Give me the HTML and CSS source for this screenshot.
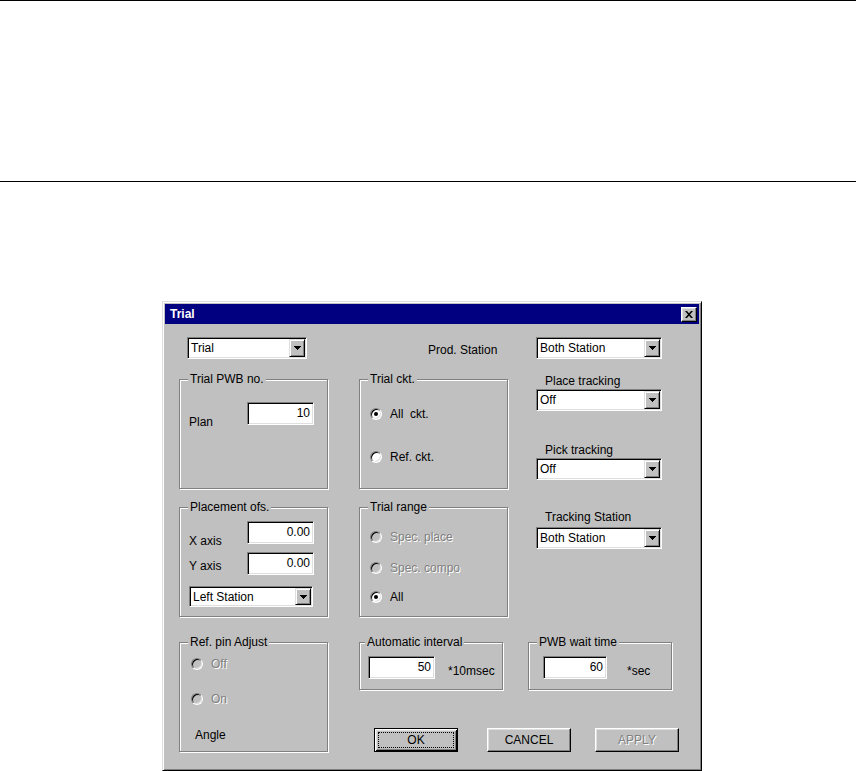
FILE: index.html
```html
<!DOCTYPE html>
<html>
<head>
<meta charset="utf-8">
<title>Trial</title>
<link rel="stylesheet" href="styles.css">
</head>
<body>
<div class="topband"></div>
<div class="dialog">
  <div class="titlebar">
    <span class="title">Trial</span>
    <span class="close"><svg width="8" height="7" viewBox="0 0 8 7"><path d="M0 0h2l2 2.2L6 0h2L5 3.5 8 7H6L4 4.8 2 7H0l3-3.5z" fill="#000"/></svg></span>
  </div>
  <div class="client">
    <div class="row row1">
      <div class="combo c-trial"><span class="combo-text">Trial</span><span class="combo-btn"><svg width="7" height="4" viewBox="0 0 7 4"><rect x="0" y="0" width="7" height="1"/><rect x="1" y="1" width="5" height="1"/><rect x="2" y="2" width="3" height="1"/><rect x="3" y="3" width="1" height="1"/></svg></span></div>
      <div class="prod-label">Prod. Station</div>
      <div class="combo c-right"><span class="combo-text">Both Station</span><span class="combo-btn"><svg width="7" height="4" viewBox="0 0 7 4"><rect x="0" y="0" width="7" height="1"/><rect x="1" y="1" width="5" height="1"/><rect x="2" y="2" width="3" height="1"/><rect x="3" y="3" width="1" height="1"/></svg></span></div>
    </div>

    <div class="row row2">
      <div class="group g-big">
        <div class="gtitle">Trial PWB no.</div>
        <div class="field f-plan">
          <span class="flabel l-plan">Plan</span>
          <span class="edit e-std">10</span>
        </div>
      </div>
      <div class="group g-big">
        <div class="gtitle">Trial ckt.</div>
        <div class="opt o-allckt"><span class="radio on"></span><span class="otext">All&nbsp; ckt.</span></div>
        <div class="opt o-refckt"><span class="radio"></span><span class="otext">Ref. ckt.</span></div>
      </div>
      <div class="stack">
        <div class="slabel s-place">Place tracking</div>
        <div class="combo c-right"><span class="combo-text">Off</span><span class="combo-btn"><svg width="7" height="4" viewBox="0 0 7 4"><rect x="0" y="0" width="7" height="1"/><rect x="1" y="1" width="5" height="1"/><rect x="2" y="2" width="3" height="1"/><rect x="3" y="3" width="1" height="1"/></svg></span></div>
        <div class="slabel s-pick">Pick tracking</div>
        <div class="combo c-right"><span class="combo-text">Off</span><span class="combo-btn"><svg width="7" height="4" viewBox="0 0 7 4"><rect x="0" y="0" width="7" height="1"/><rect x="1" y="1" width="5" height="1"/><rect x="2" y="2" width="3" height="1"/><rect x="3" y="3" width="1" height="1"/></svg></span></div>
      </div>
    </div>

    <div class="row row3">
      <div class="group g-big">
        <div class="gtitle">Placement ofs.</div>
        <div class="field f-x">
          <span class="flabel l-x">X axis</span>
          <span class="edit e-std">0.00</span>
        </div>
        <div class="field f-y">
          <span class="flabel l-y">Y axis</span>
          <span class="edit e-std">0.00</span>
        </div>
        <div class="combo c-left"><span class="combo-text">Left Station</span><span class="combo-btn"><svg width="7" height="4" viewBox="0 0 7 4"><rect x="0" y="0" width="7" height="1"/><rect x="1" y="1" width="5" height="1"/><rect x="2" y="2" width="3" height="1"/><rect x="3" y="3" width="1" height="1"/></svg></span></div>
      </div>
      <div class="group g-big">
        <div class="gtitle">Trial range</div>
        <div class="opt o-r1"><span class="radio dis"></span><span class="otext dis">Spec. place</span></div>
        <div class="opt o-r2"><span class="radio dis"></span><span class="otext dis">Spec. compo</span></div>
        <div class="opt o-r3"><span class="radio on"></span><span class="otext">All</span></div>
      </div>
      <div class="stack">
        <div class="slabel s-track">Tracking Station</div>
        <div class="combo c-right"><span class="combo-text">Both Station</span><span class="combo-btn"><svg width="7" height="4" viewBox="0 0 7 4"><rect x="0" y="0" width="7" height="1"/><rect x="1" y="1" width="5" height="1"/><rect x="2" y="2" width="3" height="1"/><rect x="3" y="3" width="1" height="1"/></svg></span></div>
      </div>
    </div>

    <div class="row row4">
      <div class="group g-big">
        <div class="gtitle">Ref. pin Adjust</div>
        <div class="opt o-off"><span class="radio dis"></span><span class="otext dis">Off</span></div>
        <div class="opt o-on"><span class="radio dis"></span><span class="otext dis">On</span></div>
        <div class="angle">Angle</div>
      </div>
      <div class="bc">
        <div class="bc-groups">
          <div class="group g-small g-auto">
            <div class="gtitle t-auto">Automatic interval</div>
            <div class="field f-small">
              <span class="edit e-auto">50</span>
              <span class="unit u-auto">*10msec</span>
            </div>
          </div>
          <div class="group g-small g-wait">
            <div class="gtitle">PWB wait time</div>
            <div class="field f-small">
              <span class="edit e-wait">60</span>
              <span class="unit u-wait">*sec</span>
            </div>
          </div>
        </div>
        <div class="buttons">
          <div class="btn btn-default b-ok"><span class="focus">OK</span></div>
          <div class="btn b-cancel">CANCEL</div>
          <div class="btn b-apply dis">APPLY</div>
        </div>
      </div>
    </div>
  </div>
</div>
</body>
</html>
```
FILE: styles.css
```css
* { box-sizing: border-box; }

html, body {
  margin: 0;
  overflow: hidden;
}

body {
  background: #fff;
  font-family: "Liberation Sans", Arial, sans-serif;
  font-size: 12px;
  line-height: 14px;
  color: #000;
}

.topband {
  height: 182px;
  border-top: 1px solid #000;
  border-bottom: 1px solid #000;
}

.dialog {
  margin: 119px 0 0 162px;
  width: 540px;
  height: 470px;
  background: #c0c0c0;
  border: 1px solid;
  border-color: #dfdfdf #000 #000 #dfdfdf;
  box-shadow: inset 1px 1px 0 #fff, inset -1px -1px 0 #808080;
  padding: 2px;
}

.titlebar {
  height: 20px;
  background: #000080;
  color: #fff;
  font-weight: bold;
  display: flex;
  align-items: center;
  justify-content: space-between;
  padding: 0 2px 0 5px;
}

.close {
  width: 16px;
  height: 15px;
  background: #c0c0c0;
  border: 1px solid;
  border-color: #fff #000 #000 #fff;
  box-shadow: inset -1px -1px 0 #808080, inset 1px 1px 0 #dfdfdf;
  display: flex;
  align-items: center;
  justify-content: center;
}

.client {
  padding: 13px 0 0 14px;
}

.row {
  display: grid;
  grid-template-columns: 180px 169px 1fr;
  align-items: start;
}

.row2 { margin-top: 13px; }
.row3 { margin-top: 11px; }
.row4 { margin-top: 18px; grid-template-columns: 180px 1fr; }

/* sunken field look */
.combo, .edit {
  background: #fff;
  border: 1px solid;
  border-color: #808080 #fff #fff #808080;
  box-shadow: inset 1px 1px 0 #000, inset -1px -1px 0 #dfdfdf;
}

.combo {
  display: flex;
  height: 22px;
  padding: 1px;
}

.combo-text {
  flex: 1;
  padding-left: 2px;
  line-height: 18px;
  white-space: nowrap;
}

.combo-btn {
  width: 16px;
  background: #c0c0c0;
  border: 1px solid;
  border-color: #dfdfdf #000 #000 #dfdfdf;
  box-shadow: inset 1px 1px 0 #fff, inset -1px -1px 0 #808080;
  display: flex;
  align-items: center;
  justify-content: center;
}

.c-trial { width: 120px; margin-left: 8px; }
.c-right { width: 126px; margin-left: 8px; }
.c-left { width: 124px; height: 21px; margin: 11px 0 0 9px; }

.prod-label {
  margin: 6px 0 0 69px;
  white-space: nowrap;
}

.edit {
  display: block;
  height: 23px;
  line-height: 21px;
  text-align: right;
  padding: 0 3px;
}

.e-std { width: 67px; }
.e-auto { width: 67px; margin-left: 8px; }
.e-wait { width: 64px; margin-left: 14px; }

/* group boxes */
.group {
  margin-top: 7px;
  border: 1px solid #808080;
  box-shadow: inset 1px 1px 0 #fff, 1px 1px 0 #fff;
}

.g-big { width: 149px; height: 110px; }
.g-small { width: 144px; height: 48px; }

.gtitle {
  width: fit-content;
  margin: -8px 0 0 8px;
  padding: 0 2px;
  background: #c0c0c0;
  white-space: nowrap;
}

.t-auto { margin-left: 5px; }

.field {
  display: flex;
  align-items: flex-start;
  height: 23px;
}

.f-plan { margin-top: 16px; }
.f-x { margin-top: 7px; }
.f-y { margin-top: 8px; }
.f-small { margin-top: 7px; }

.flabel {
  width: 58px;
  margin-left: 9px;
  white-space: nowrap;
}

.l-plan { padding-top: 13px; }
.l-x { padding-top: 13px; }
.l-y { padding-top: 7px; }

.unit { padding-top: 8px; white-space: nowrap; }
.u-auto { margin-left: 13px; }
.u-wait { margin-left: 20px; }

/* radio options */
.opt {
  display: flex;
  align-items: center;
  height: 14px;
  margin-left: 10px;
}

.o-allckt { margin-top: 21px; }
.o-refckt { margin-top: 29px; }
.o-r1 { margin-top: 16px; }
.o-r2 { margin-top: 17px; }
.o-r3 { margin-top: 15px; }
.o-off { margin-top: 8px; margin-left: 11px; }
.o-on { margin-top: 21px; margin-left: 11px; }

.radio {
  position: relative;
  flex: none;
  width: 12px;
  height: 12px;
  border-radius: 50%;
  background: #fff;
  border: 1px solid;
  border-color: #808080 #fff #fff #808080;
  box-shadow: inset 1px 1px 0 #000, inset -1px -1px 0 #dfdfdf;
}

.radio.dis { background: #c0c0c0; }

.radio.on::after {
  content: "";
  position: absolute;
  left: 3px;
  top: 3px;
  width: 4px;
  height: 4px;
  border-radius: 50%;
  background: #000;
}

.otext {
  margin-left: 8px;
  white-space: nowrap;
}

.dis {
  color: #808080;
  text-shadow: 1px 1px 0 #fff;
}

.angle {
  margin: 22px 0 0 15px;
}

/* right-hand stacks */
.slabel { margin-left: 17px; white-space: nowrap; }
.s-place { margin-top: 2px; }
.s-place + .combo { margin-top: 1px; }
.s-pick { margin-top: 32px; }
.s-pick + .combo { margin-top: 1px; }
.s-track { margin-top: 10px; }
.s-track + .combo { margin-top: 3px; }

/* bottom block */
.bc-groups {
  display: flex;
  gap: 25px;
}

.buttons {
  display: flex;
  margin-top: 38px;
}

.btn {
  width: 84px;
  height: 24px;
  display: flex;
  align-items: center;
  justify-content: center;
  background: #c0c0c0;
  border: 1px solid;
  border-color: #fff #000 #000 #fff;
  box-shadow: inset -1px -1px 0 #808080, inset 1px 1px 0 #dfdfdf;
}

.btn-default {
  border-color: #000;
  box-shadow: inset 1px 1px 0 #fff, inset -1px -1px 0 #000, inset 2px 2px 0 #dfdfdf, inset -2px -2px 0 #808080;
  padding: 3px;
}

.focus {
  flex: 1;
  align-self: stretch;
  display: flex;
  align-items: center;
  justify-content: center;
  border: 1px dotted #000;
}

.b-ok { margin-left: 15px; }
.b-cancel { margin-left: 29px; }
.b-apply { margin-left: 24px; }
```
